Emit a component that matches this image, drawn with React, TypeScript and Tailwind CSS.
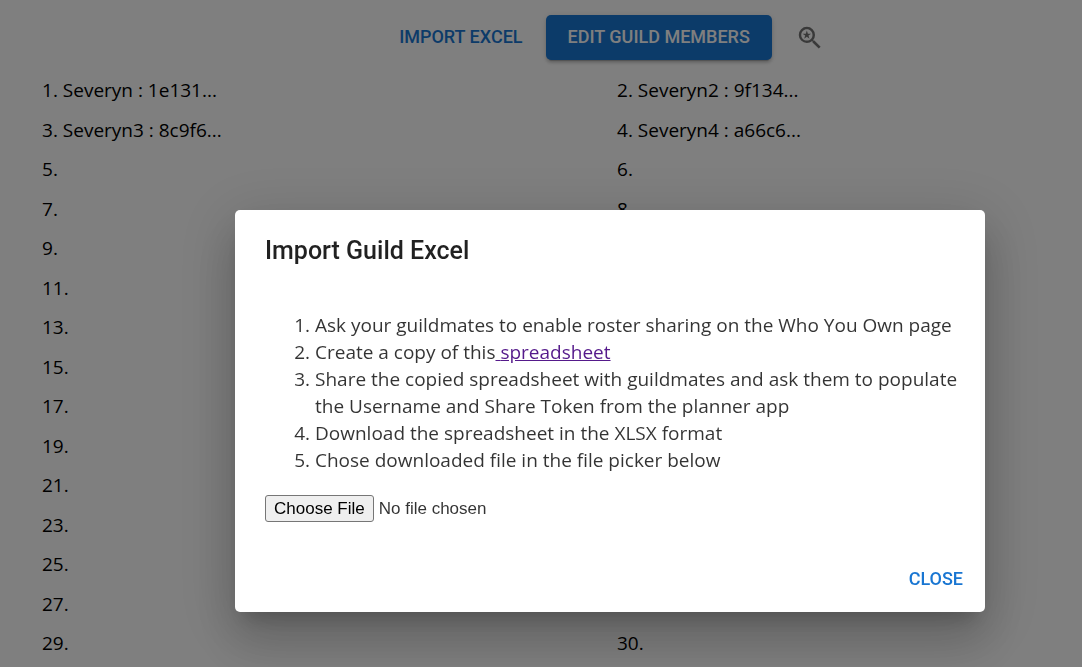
import { MdSavedSearch } from "react-icons/md";

type Member = { name: string; token: string };

const members: Member[] = [
  { name: "Severyn", token: "1e131" },
  { name: "Severyn2", token: "9f134" },
  { name: "Severyn3", token: "8c9f6" },
  { name: "Severyn4", token: "a66c6" },
];

const GUILD_SIZE = 30;

function Toolbar() {
  return (
    <header className="flex items-center justify-center gap-3 pt-[15px] pl-[131px] font-['Roboto',sans-serif] text-[18px] font-medium">
      <button type="button" className="h-[45px] rounded px-[11px] pb-[2px] text-[#1976d2]">
        IMPORT EXCEL
      </button>
      <button
        type="button"
        className="h-[45px] rounded-[5px] bg-[#1976d2] px-[22px] pb-[2px] text-white shadow-[0_4px_1px_-3px_rgba(0,0,0,0.2),0_3px_3px_0_rgba(0,0,0,0.14),0_1px_6px_0_rgba(0,0,0,0.12)]"
      >
        EDIT GUILD MEMBERS
      </button>
      <button type="button" aria-label="Search rosters" className="ml-[11px] text-black/55">
        <MdSavedSearch size={30} />
      </button>
    </header>
  );
}

function MemberList() {
  const slots = Array.from({ length: GUILD_SIZE }, (_, i) => members[i]);
  return (
    <ul className="mt-[10px] grid auto-rows-[40px_39px] grid-cols-[575px_1fr] pl-[42px] text-[19px] leading-[40px] text-black">
      {slots.map((member, i) => (
        <li key={i}>
          {i + 1}. {member ? `${member.name} : ${member.token}...` : ""}
        </li>
      ))}
    </ul>
  );
}

function ImportDialog() {
  return (
    <div className="fixed inset-0 flex items-start justify-end bg-black/50 pt-[210px] pr-[97px]">
      <section
        role="dialog"
        aria-modal="true"
        aria-labelledby="import-title"
        className="w-full max-w-[750px] rounded-[5px] bg-white shadow-[0_14px_19px_-9px_rgba(0,0,0,0.2),0_30px_48px_4px_rgba(0,0,0,0.14),0_11px_58px_10px_rgba(0,0,0,0.12)]"
      >
        <h2
          id="import-title"
          className="px-[30px] pt-[21px] pb-5 font-['Roboto',sans-serif] text-[25px] leading-[40px] font-medium text-black/87"
        >
          Import Guild Excel
        </h2>
        <div className="pt-[21px] pr-5 pb-[25px] pl-[30px] text-black/80">
          <ol className="list-decimal pl-[50px] text-[19px] leading-[27px]">
            <li>Ask your guildmates to enable roster sharing on the Who You Own page</li>
            <li>
              Create a copy of this
              <a href="#spreadsheet" className="text-[#551a8b] underline">
                {" "}
                spreadsheet
              </a>
            </li>
            <li>
              Share the copied spreadsheet with guildmates and ask them to populate the Username and
              Share Token from the planner app
            </li>
            <li>Download the spreadsheet in the XLSX format</li>
            <li>Chose downloaded file in the file picker below</li>
          </ol>
          <input
            type="file"
            aria-label="Guild spreadsheet"
            accept=".xlsx"
            className="mt-[21px] block w-full font-['Liberation_Sans',sans-serif] text-[17px] leading-[25px] text-black/80 file:mr-[5px] file:h-[27px] file:rounded-[3px] file:border file:border-solid file:border-[#767676] file:bg-[#efefef] file:px-[8px] file:text-black"
          />
        </div>
        <div className="flex justify-end px-[10px] pt-[9px] pb-[11px]">
          <button
            type="button"
            className="h-[45px] rounded px-[12px] font-['Roboto',sans-serif] text-[18px] font-medium text-[#1976d2]"
          >
            CLOSE
          </button>
        </div>
      </section>
    </div>
  );
}

export default function App() {
  return (
    <main className="h-screen overflow-hidden bg-white font-['Open_Sans','Noto_Sans',sans-serif]">
      <Toolbar />
      <MemberList />
      <ImportDialog />
    </main>
  );
}
